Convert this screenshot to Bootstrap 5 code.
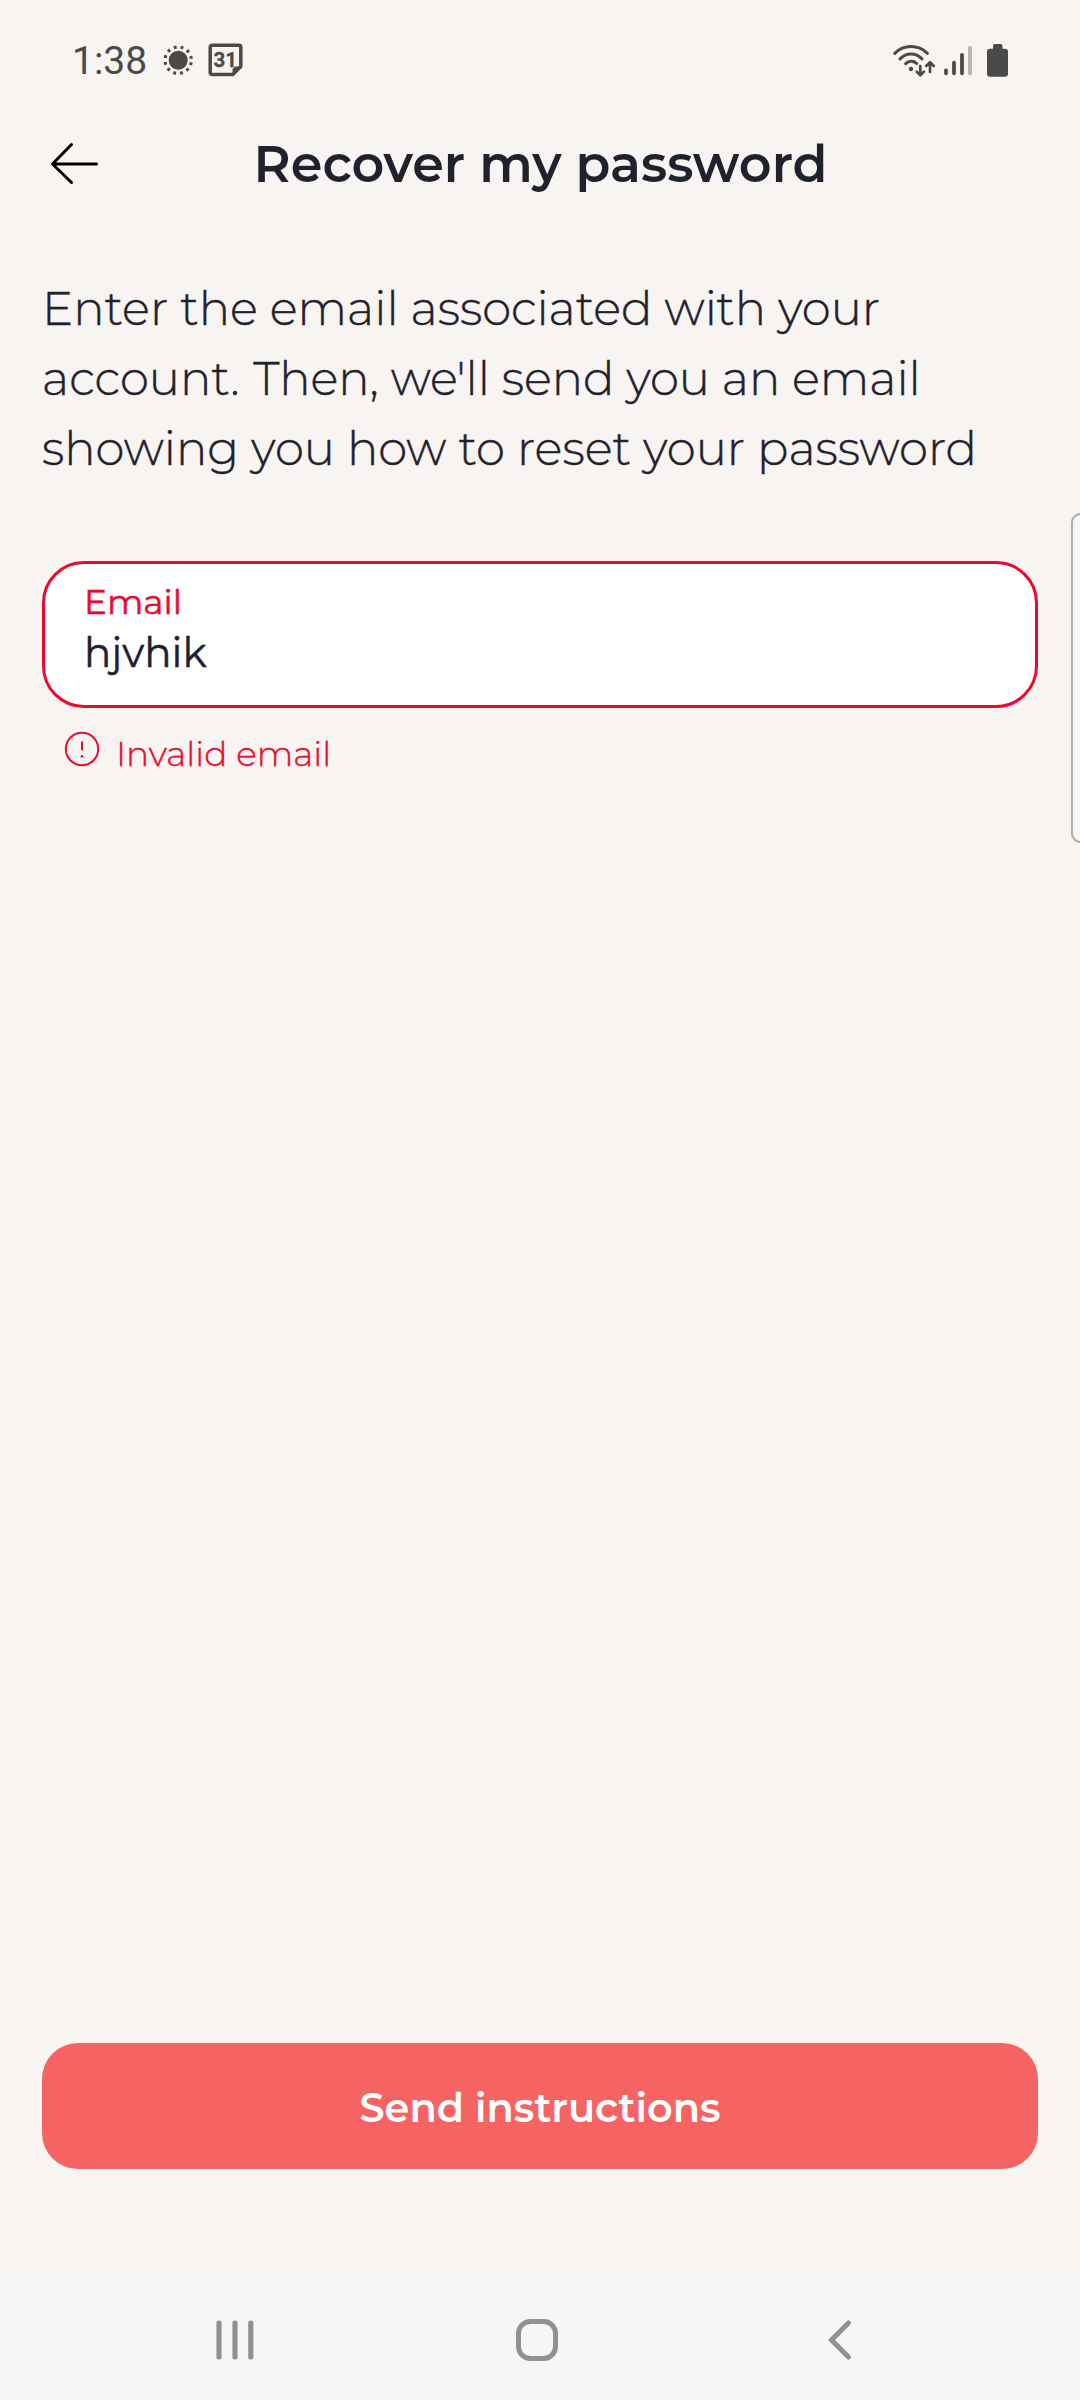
<!DOCTYPE html>
<html lang="en">
<head>
<meta charset="utf-8">
<meta name="viewport" content="width=device-width, initial-scale=1">
<title>Recover my password</title>
<link href="https://cdn.jsdelivr.net/npm/bootstrap@5.3.0/dist/css/bootstrap.min.css" rel="stylesheet">
<style>
body{background:#f8f4f1;color:#1f212d;font-family:Montserrat,Inter,sans-serif}
svg{display:block;flex:none}
.screen{width:1080px;height:2400px}
.status-bar{height:120px;padding:0 70px 0 72px;color:#4b4a48}
.clock{font:400 39px/46px Roboto,sans-serif;width:90px;padding-top:1px}
.cal-icon{margin-left:13px}
.cal-day{font:700 20.5px Roboto,sans-serif;stroke:currentColor;stroke-width:.3px}
.app-bar{height:87px;padding-left:48px}
.t-title{font-size:50.86px;line-height:64px;font-weight:600;padding-right:99px}
.content-area{padding:66.5px 42px 0}
.t-intro{font-size:46.55px;line-height:70px;font-weight:300;-webkit-text-stroke:.4px;margin-bottom:77.5px}
.sentence-end{margin-right:1.6px}
.sentence-next{letter-spacing:-.05px}
.field-box{height:147px;border:3px solid #ea0a2c;border-radius:42px;padding:17px 39px 0}
.t-label{font-size:34.3px;line-height:42px;color:#ea0a2c;-webkit-text-stroke:.5px}
.t-value{font-size:40.4px;line-height:50px;height:50px;margin-top:5px;color:#1f212d;-webkit-text-stroke:.5px}
.t-error{font-size:34.3px;line-height:42px;font-weight:300;color:#ea0a2c;padding:22.5px 0 0 21.5px;gap:16.5px;-webkit-text-stroke:.4px}
.error-text{margin-top:2.5px}
.action-area{padding:0 42px 105px}
.btn-send{height:126px;border-radius:36px;font-size:39.85px;font-weight:600;padding:4px 0 0;--bs-btn-bg:#f66363;--bs-btn-color:#fff;--bs-btn-border-width:0;--bs-btn-hover-bg:#e95555;--bs-btn-hover-color:#fff}
.sys-nav{height:126px;background:#f6f6f6;padding:6px 220px 0 214px}
.edge-handle{right:-10px;top:513px;width:19px;height:330px;border:2px solid #afadab;border-radius:11px;background:#f7f6f5}
</style>
</head>
<body>
<div class="screen d-flex flex-column position-relative overflow-hidden">
  <header class="status-bar d-flex align-items-center">
    <span class="clock">1:38</span>
    <svg width="32" height="32" viewBox="-16.2 -16.2 32 32" fill="none" stroke="currentColor">
      <circle r="9.5" fill="currentColor" stroke="none"/>
      <circle r="13.2" stroke-width="3.1" stroke-dasharray="2.8 4.111" stroke-dashoffset="-2.06"/>
    </svg>
    <svg class="cal-icon" width="38" height="38" viewBox="0 0 38 38">
      <path d="M5.200 4.200H31.800Q33.800 4.200 33.800 6.200V25.500L25.800 33.500H5.200Q3.200 33.500 3.200 31.500V6.200Q3.200 4.200 5.200 4.200Z" fill="none" stroke="currentColor" stroke-width="3.500" stroke-linejoin="round"/>
      <path d="M25.500 34V28L28 25.500H34Z" fill="currentColor"/>
      <text x="18.300" y="26" text-anchor="middle" fill="currentColor" class="cal-day">31</text>
    </svg>
    <svg class="ms-auto" width="120" height="40" viewBox="890 40 120 40" fill="none" stroke="currentColor" stroke-width="3.1" stroke-linecap="round" stroke-linejoin="round">
      <path d="M894.8 53.3C904 44.3 918 44.3 927.4 53.3M900 58.8C906.5 52.3 915.5 52.3 922 58.8M905.7 63.6C908.7 60.6 913.5 60.6 916.5 63.4"/>
      <circle cx="911" cy="69" r="2.2" fill="currentColor" stroke="none"/>
      <path stroke-width="2.7" d="M920.3 66V75M916.7 71.6L920.3 75.2L923.9 71.6M930 72V62.4M926.2 66L930 62.2L933.8 66"/>
      <path stroke-width="3.8" d="M946 70.3V73.3M954 62.7V73.3M962 54.8V73.3"/>
      <path stroke-width="3.8" stroke="#b5b3b0" d="M970 47.8V73.3"/>
      <path fill="currentColor" stroke="none" d="M995 44h5.500a2 2 0 0 1 2 2v2.700h2.500a3 3 0 0 1 3 3v22a3 3 0 0 1-3 3h-15a3 3 0 0 1-3-3v-22a3 3 0 0 1 3-3h3v-2.700a2 2 0 0 1 2-2z"/>
    </svg>
  </header>

  <div class="app-bar d-flex align-items-center">
    <svg width="52" height="44" viewBox="48 142 52 44" fill="none" stroke="#000" stroke-width="3" stroke-linecap="round" stroke-linejoin="round">
      <path d="M96.500 164H52.500M71.500 144.500L52.500 164L71.500 182.500"/>
    </svg>
    <h1 class="t-title m-0 flex-fill text-center">Recover my password</h1>
  </div>

  <main class="content-area flex-grow-1">
    <p class="t-intro">Enter the email associated with your<br><span class="sentence-end">account.</span> <span class="sentence-next">Then, we'll send you an email</span><br>showing you how to reset your password</p>
    <div class="field-box bg-white">
      <label class="t-label d-block" for="email">Email</label>
      <input class="t-value form-control-plaintext p-0 border-0" id="email" type="text" value="hjvhik">
    </div>
    <div class="t-error d-flex">
      <svg width="36" height="36" viewBox="-18 -18 36 36" fill="none" stroke="currentColor" stroke-width="2" stroke-linecap="round">
        <circle r="16.200"/><path d="M0-6.800V.5"/><circle cy="7.200" r="1.300" fill="currentColor" stroke="none"/>
      </svg>
      <span class="error-text">Invalid email</span>
    </div>
  </main>

  <div class="action-area">
    <button class="btn btn-send w-100" type="button">Send instructions</button>
  </div>

  <nav class="sys-nav d-flex align-items-center justify-content-between">
    <svg width="42" height="42" viewBox="0 0 42 42" stroke="#919191" stroke-width="5.200" stroke-linecap="round"><path d="M5 4V38M21 4V38M36.800 4V38"/></svg>
    <svg width="42" height="42" viewBox="0 0 42 42" stroke="#919191" stroke-width="5" fill="none"><rect x="2.500" y="2.500" width="37" height="37" rx="12"/></svg>
    <svg width="42" height="42" viewBox="0 0 42 42" stroke="#919191" stroke-width="5" fill="none" stroke-linecap="round"><path d="M30.500 4L13.500 21L30.500 38"/></svg>
  </nav>

  <div class="edge-handle position-absolute"></div>
</div>
<script src="https://cdn.jsdelivr.net/npm/bootstrap@5.3.0/dist/js/bootstrap.bundle.min.js"></script>
</body>
</html>
